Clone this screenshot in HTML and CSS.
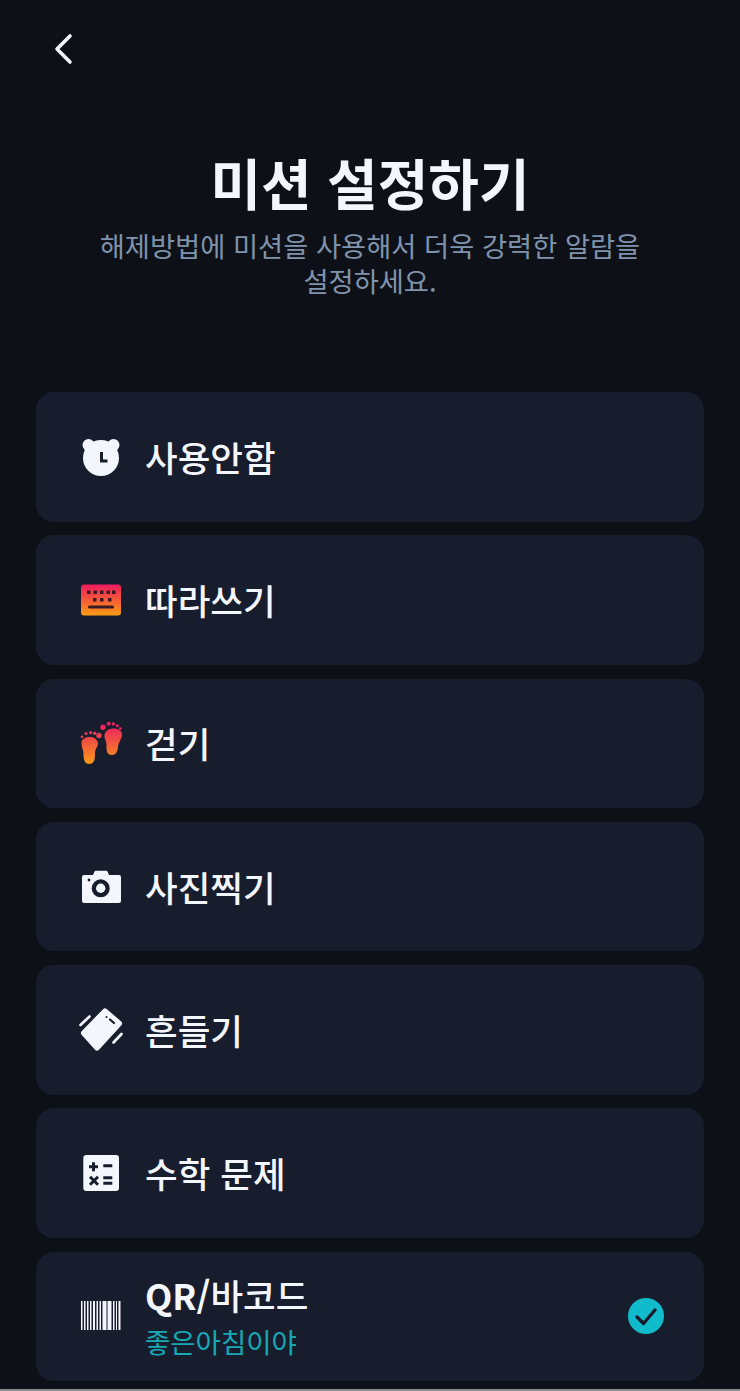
FILE: index.html
```html
<!DOCTYPE HTML>
<html lang="ko">
<head>
    <meta charset="utf-8">
    <title>미션 설정하기</title>
    <link rel="stylesheet" href="styles.css">
</head>
<body>
    <div id="screen">
        <div class="topbar">
            <svg class="back" width="24" height="34" viewBox="0 0 24 34"><path d="M18 4 L5 17 L18 30" fill="none" stroke="#f3f6fc" stroke-width="3.6" stroke-linecap="round" stroke-linejoin="round"/></svg>
        </div>
        <h1 class="title">미션 설정하기</h1>
        <p class="desc">해제방법에 미션을 사용해서 더욱 강력한 알람을<br>설정하세요.</p>

        <div class="list">
            <div class="item">
                <svg class="icon" width="44" height="44" viewBox="0 0 44 44">
                    <circle cx="9.500" cy="10" r="6" fill="#f3f6fc"/><circle cx="34.500" cy="10" r="6" fill="#f3f6fc"/>
                    <circle cx="22" cy="23" r="18" fill="#f3f6fc"/>
                    <path d="M22.500 17v9h6" fill="none" stroke="#181d2e" stroke-width="3"/>
                </svg>
                <span class="name">사용안함</span>
            </div>
            <div class="item">
                <svg class="icon" width="44" height="44" viewBox="0 0 44 44">
                    <defs><linearGradient id="kb" x1="0" y1="0" x2="0" y2="1"><stop offset="0" stop-color="#f01a60"/><stop offset="1" stop-color="#fd9c12"/></linearGradient></defs>
                    <rect x="2" y="6.500" width="40" height="31" rx="3" fill="url(#kb)"/>
                    <g fill="#3a1a25">
                        <rect x="8" y="12.500" width="3.500" height="3.500"/><rect x="14.500" y="12.500" width="3.500" height="3.500"/><rect x="21" y="12.500" width="3.500" height="3.500"/><rect x="27.500" y="12.500" width="3.500" height="3.500"/><rect x="33" y="12.500" width="3.500" height="3.500"/>
                        <rect x="14" y="20" width="3.500" height="3.500"/><rect x="21" y="20" width="3.500" height="3.500"/><rect x="29" y="20" width="3.500" height="3.500"/>
                        <rect x="9" y="27.500" width="26" height="3" rx="1.500"/>
                    </g>
                </svg>
                <span class="name">따라쓰기</span>
            </div>
            <div class="item">
                <svg class="icon" width="44" height="44" viewBox="0 0 44 44">
                    <defs><linearGradient id="ft" gradientUnits="userSpaceOnUse" x1="0" y1="4" x2="0" y2="43"><stop offset="0" stop-color="#ec1f60"/><stop offset="1" stop-color="#fb9a17"/></linearGradient></defs>
                    <g fill="url(#ft)">
                        <path d="M2.500 22C2.500 17 8 15.500 12 16C16 16.500 19.500 19.500 19 23C18.500 26.500 16 28 16 32C16 37 16 43 10 43C5.500 43 4.500 38 4.500 33.500C4.500 29.500 2.500 26 2.500 22z"/>
                        <path d="M43 13C43 9 37.500 7 33.500 7.500C28.500 8 25.500 11 25.500 15C25.500 18.500 27.500 20 27.500 24C27.500 28 27 34 33 34C37.500 34 38.500 30 39 26C39.500 21 43 18 43 13z"/>
                        <circle cx="20" cy="14.500" r="2.700"/><circle cx="15.700" cy="12.300" r="1.700"/><circle cx="11.700" cy="11.700" r="1.600"/><circle cx="7" cy="12.500" r="1.500"/><circle cx="3" cy="15.700" r="1.300"/>
                        <circle cx="24" cy="6.300" r="2.700"/><circle cx="29.700" cy="2.800" r="2"/><circle cx="34.300" cy="3" r="1.700"/><circle cx="38.300" cy="4.700" r="1.500"/><circle cx="41.300" cy="7.600" r="1.300"/>
                    </g>
                </svg>
                <span class="name">걷기</span>
            </div>
            <div class="item">
                <svg class="icon" width="44" height="44" viewBox="0 0 44 44">
                    <path d="M5 10h9l1.500-3.500a1.500 1.500 0 0 1 1.400-.8h10.200a1.500 1.500 0 0 1 1.400.8L30 10h10a2 2 0 0 1 2 2v24a2 2 0 0 1-2 2H5a2 2 0 0 1-2-2V12a2 2 0 0 1 2-2z" fill="#f3f6fc"/>
                    <circle cx="21.700" cy="23.300" r="9" fill="#181d2e"/><circle cx="21.700" cy="23.300" r="4.700" fill="#f3f6fc"/>
                    <circle cx="10" cy="15" r="1.400" fill="#181d2e"/>
                </svg>
                <span class="name">사진찍기</span>
            </div>
            <div class="item">
                <svg class="icon" width="44" height="44" viewBox="0 0 44 44">
                    <path d="M26 3.500L5 25L18 39.500L40 15.500z" fill="#f3f6fc" stroke="#f3f6fc" stroke-width="6" stroke-linejoin="round"/>
                    <path d="M31 11.500l4 3.500" stroke="#181d2e" stroke-width="2.200" stroke-linecap="round"/>
                    <circle cx="27.500" cy="9" r="1" fill="#181d2e"/>
                    <path d="M1.500 17L10.500 8.500M34.500 34.500L42.500 26" stroke="#f3f6fc" stroke-width="2.600" stroke-linecap="round"/>
                </svg>
                <span class="name">흔들기</span>
            </div>
            <div class="item">
                <svg class="icon" width="44" height="44" viewBox="0 0 44 44">
                    <rect x="4.300" y="4" width="35.700" height="36" rx="3" fill="#f3f6fc"/>
                    <path d="M10 15.700h9M14.500 11.200v9M24.300 14.700h9M11 25.700l8 8M19 25.700l-8 8M24.300 26.700h9M24.300 32.300h9" stroke="#181d2e" stroke-width="3" fill="none"/>
                </svg>
                <span class="name">수학 문제</span>
            </div>
            <div class="item">
                <svg class="icon" width="44" height="44" viewBox="0 0 44 44">
                    <g fill="#f3f6fc">
                        <rect x="2" y="7" width="1.500" height="29"/><rect x="5" y="7" width="1.500" height="29"/><rect x="8" y="7" width="1.500" height="29"/><rect x="11" y="7" width="1.500" height="29"/><rect x="14" y="7" width="2" height="29"/><rect x="17.500" y="7" width="1.500" height="29"/><rect x="20.500" y="7" width="1.500" height="29"/><rect x="23.500" y="7" width="4" height="29"/><rect x="28.500" y="7" width="4" height="29"/><rect x="34" y="7" width="1.500" height="29"/><rect x="37" y="7" width="1" height="29"/><rect x="39.500" y="7" width="2" height="29"/>
                    </g>
                </svg>
                <div class="texts">
                    <span class="name"><b>QR/</b>바코드</span>
                    <span class="sub">좋은아침이야</span>
                </div>
                <svg class="check" width="36" height="36" viewBox="0 0 36 36">
                    <circle cx="18" cy="18" r="18" fill="#10bccb"/>
                    <path d="M9 19l6.500 6.500L27 12" fill="none" stroke="#181d2e" stroke-width="3.400" stroke-linecap="round" stroke-linejoin="round"/>
                </svg>
            </div>
        </div>
        <div class="bottomline"></div>
    </div>
</body>
</html>
```

FILE: styles.css
```css
html, body {
    margin: 0;
    padding: 0;
    background: #0d1117;
}

#screen {
    width: 740px;
    height: 1391px;
    overflow: hidden;
    display: flex;
    flex-direction: column;
    background: #0d1117;
    font-family: "Noto Sans CJK KR", "Noto Sans", sans-serif;
    color: #f3f6fc;
}

.topbar {
    height: 34px;
    margin-top: 32px;
    padding-left: 52px;
}

.back {
    display: block;
}

.title {
    margin: 78px 0 10px 0;
    height: 74px;
    line-height: 74px;
    font-size: 55px;
    font-weight: 700;
    text-align: center;
}

.desc {
    margin: 0;
    font-size: 27.3px;
    line-height: 35px;
    font-weight: 400;
    color: #8093ad;
    text-align: center;
}

.list {
    margin: 94px 36px 0 36px;
    display: flex;
    flex-direction: column;
    gap: 13.75px;
}

.item {
    height: 129.5px;
    padding: 0 40px 0 43px;
    border-radius: 18px;
    background: #181d2e;
    display: flex;
    align-items: center;
}

.icon {
    flex: none;
    margin-right: 22px;
}

.name {
    font-size: 35.5px;
    line-height: 42px;
    font-weight: 500;
}

.texts {
    flex: 1;
    display: flex;
    flex-direction: column;
    gap: 8px;
}

.sub {
    font-size: 27.5px;
    line-height: 34px;
    color: #17a9b5;
}

.check {
    flex: none;
}

.bottomline {
    margin-top: 8px;
    height: 2px;
    background: #8a8b8d;
}
```
